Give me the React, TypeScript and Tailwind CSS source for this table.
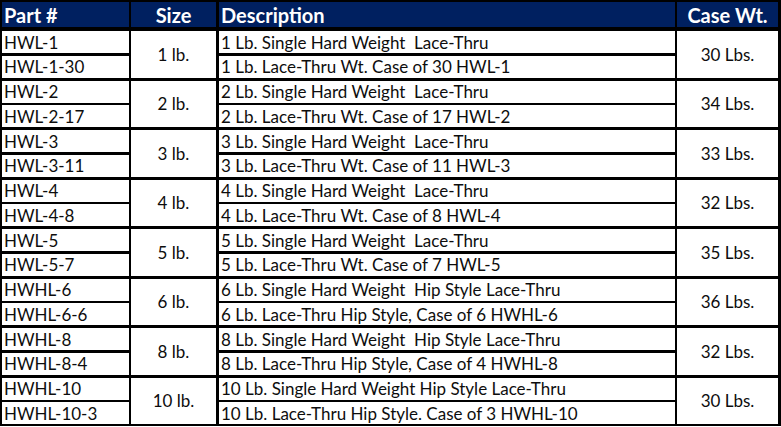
const rows = [
  { parts: ['HWL-1', 'HWL-1-30'], size: '1 lb.', desc: ['1 Lb. Single Hard Weight  Lace-Thru', '1 Lb. Lace-Thru Wt. Case of 30 HWL-1'], wt: '30 Lbs.' },
  { parts: ['HWL-2', 'HWL-2-17'], size: '2 lb.', desc: ['2 Lb. Single Hard Weight  Lace-Thru', '2 Lb. Lace-Thru Wt. Case of 17 HWL-2'], wt: '34 Lbs.' },
  { parts: ['HWL-3', 'HWL-3-11'], size: '3 lb.', desc: ['3 Lb. Single Hard Weight  Lace-Thru', '3 Lb. Lace-Thru Wt. Case of 11 HWL-3'], wt: '33 Lbs.' },
  { parts: ['HWL-4', 'HWL-4-8'], size: '4 lb.', desc: ['4 Lb. Single Hard Weight  Lace-Thru', '4 Lb. Lace-Thru Wt. Case of 8 HWL-4'], wt: '32 Lbs.' },
  { parts: ['HWL-5', 'HWL-5-7'], size: '5 lb.', desc: ['5 Lb. Single Hard Weight  Lace-Thru', '5 Lb. Lace-Thru Wt. Case of 7 HWL-5'], wt: '35 Lbs.' },
  { parts: ['HWHL-6', 'HWHL-6-6'], size: '6 lb.', desc: ['6 Lb. Single Hard Weight  Hip Style Lace-Thru', '6 Lb. Lace-Thru Hip Style, Case of 6 HWHL-6'], wt: '36 Lbs.' },
  { parts: ['HWHL-8', 'HWHL-8-4'], size: '8 lb.', desc: ['8 Lb. Single Hard Weight  Hip Style Lace-Thru', '8 Lb. Lace-Thru Hip Style, Case of 4 HWHL-8'], wt: '32 Lbs.' },
  { parts: ['HWHL-10', 'HWHL-10-3'], size: '10 lb.', desc: ['10 Lb. Single Hard Weight Hip Style Lace-Thru', '10 Lb. Lace-Thru Hip Style. Case of 3 HWHL-10'], wt: '30 Lbs.' },
]

const SplitCell = ({ items, width, gap }: { items: string[]; width: string; gap: string }) => (
  <div className={`flex flex-col ${width} ${gap}`}>
    <div className="h-[22px] bg-white flex items-center pl-[2px] whitespace-pre leading-none">{items[0]}</div>
    <div className="h-[2.5px]" />
    <div className="h-[22px] bg-white flex items-center pl-[2px] whitespace-pre leading-none">{items[1]}</div>
  </div>
)

export default function App() {
  return (
    <div className="w-[781px] h-[427px] bg-white overflow-hidden" style={{ fontFamily: 'Lato, "Open Sans", sans-serif' }}>
      <div className="bg-black pl-[2px] pr-[3px] pt-[2px] pb-[2px] text-[17px] text-[#0d0d0d]">
        <div className="flex h-[25px] text-white font-bold text-[20px] leading-none">
          <div className="w-[127px] bg-[#002060] flex items-center pl-[2px]">Part #</div>
          <div className="w-[85px] ml-[2px] bg-[#002060] flex items-center justify-center">Size</div>
          <div className="w-[456px] ml-[3px] bg-[#002060] flex items-center pl-[2px]">Description</div>
          <div className="w-[101px] ml-[2px] bg-[#002060] flex items-center justify-center">Case Wt.</div>
        </div>
        <div className="mt-[4px] flex flex-col gap-[3px]">
          {rows.map((r) => (
            <div key={r.size} className="flex h-[46.5px]">
              <SplitCell items={r.parts} width="w-[127px]" gap="" />
              <div className="w-[85px] ml-[2px] bg-white flex items-center justify-center leading-none">{r.size}</div>
              <SplitCell items={r.desc} width="w-[456px]" gap="ml-[3px]" />
              <div className="w-[101px] ml-[2px] bg-white flex items-center justify-center leading-none">{r.wt}</div>
            </div>
          ))}
        </div>
      </div>
    </div>
  )
}
